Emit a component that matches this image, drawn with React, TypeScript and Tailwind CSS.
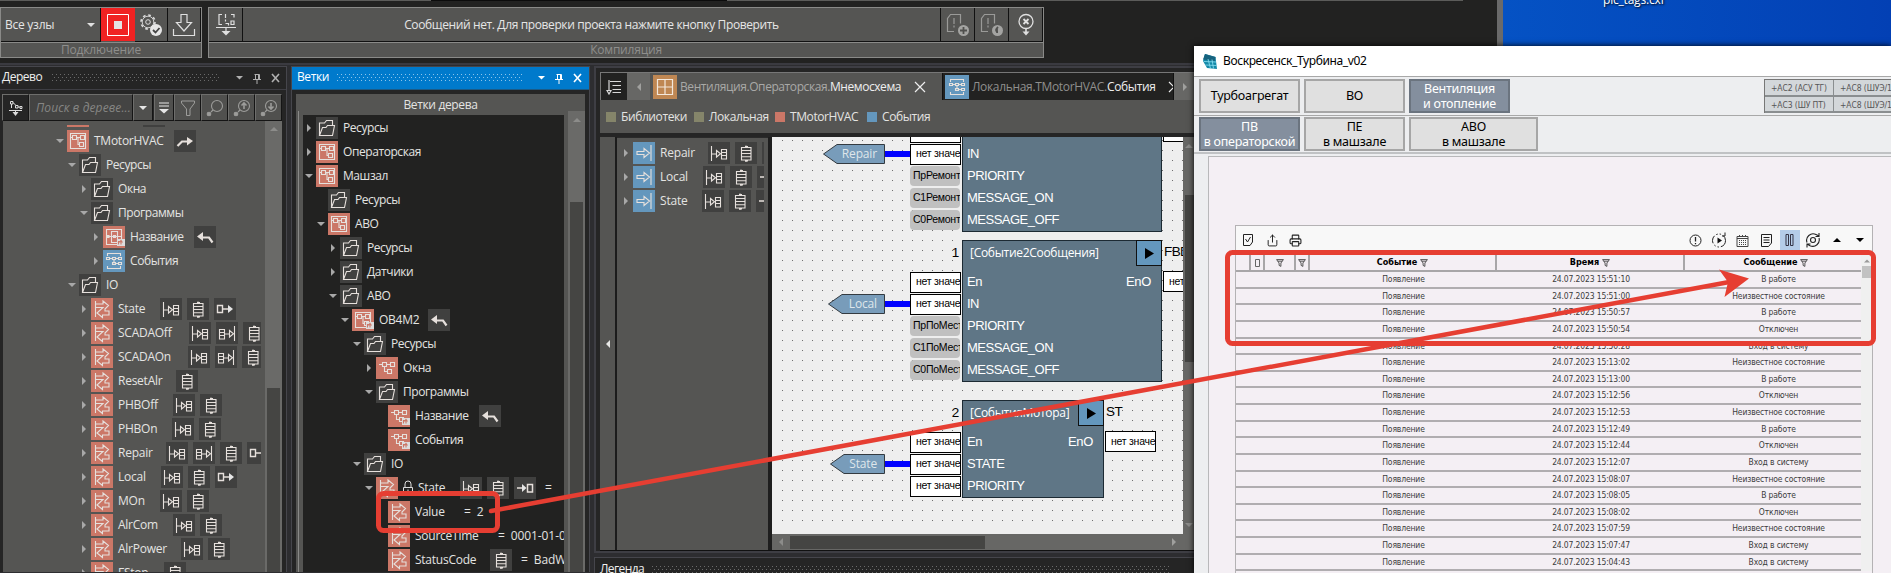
import React from "react";
import { Printer, Share } from "lucide-react";

const ui = "font-['Open_Sans','Noto_Sans',sans-serif]";

/* ---------- glyphs ---------- */

const TILE_COLORS: Record<string, string> = {
  fb: "bg-[#cb7767]",
  fbsub: "bg-[#cb7767]",
  fbx: "bg-[#cb7767]",
  prog: "bg-[#cb7767]",
  progsub: "bg-[#cb7767]",
  io: "bg-[#cb7767]",
  folder: "bg-[#40403f]",
  event: "bg-[#6497bd]",
  input: "bg-[#6497bd]",
};

const OVERLAY = (
  <g>
    <rect x="14" y="13" width="8" height="7" fill="#dcdcdc" stroke="none" />
    <path d="M17 15.5h-1.5v3M18 18.5v-3.5M16.5 16.5l1.5-2 1.5 2" stroke="#cb7767" />
  </g>
);

const BLOCKS = <path d="M5.500 5.500h4v4h-4zM13.500 5.500h4v4h-4zM12.500 12.500h4v4h-4zM9.500 7.500h4M3 7.500h2.500M11 7.500v7h1.500" />;
const LOOSE_BLOCKS = <path d="M6.500 5.500h4v4h-4zM14.500 5.500h4v4h-4zM11.500 12.500h4v4h-4zM10.500 7.500h4M3 7.500h3.500M8.500 9.500v5h3" />;

const GLYPHS: Record<string, React.ReactNode> = {
  fb: <><path d="M3.500 3.500h15v15h-15z" />{BLOCKS}</>,
  fbx: <><path d="M3.500 3.500h15v15h-15z" />{BLOCKS}{OVERLAY}</>,
  fbsub: LOOSE_BLOCKS,
  progsub: <>{LOOSE_BLOCKS}{OVERLAY}</>,
  prog: <><path d="M3.500 3.500h15v15h-15zM8.500 5.500h6v11h-6zM3.500 10.500h15M4 9.500h2v2H4zM10.500 9.500h2v2h-2z" />{OVERLAY}</>,
  io: <path d="M4.500 3v16M4.500 6H12V3l5.500 4.500L14 11v2h4v4h-6.500v2.500L6 15l6-5.500H4.500" />,
  folder: <path d="M3.500 18.500V6h5l2-2.500h6v5M3.500 18.500l3-8H10l1.500-2h7l-2 10z" />,
  event: <path d="M4.500 6V3.500h13V6M4.500 16v2.500h13V16M3.500 7.500h3v2h-3zM9.500 7.500h3v2h-3zM15.500 7.500h3v2h-3zM6.500 8.500h3M12.500 8.500h3M11 9.500v4M9.500 12.500h3v2h-3zM15.500 12.500h3v2h-3zM12.500 13.500h3" />,
  input: <path d="M18 3v16M4 9.500h7V6.500l5.500 4.500-5.500 4.500v-3H4z" />,
  in: <path d="M3.500 4v15M3.500 12H8.500M8.500 8.500v6.500l4-3.200zM13.500 7.500h5v9.500h-5zM13.500 10.500h5M13.500 13.500h5" />,
  out: <path d="M18.500 4v15M8.500 12h5M13.500 8.500v6.500l4-3.200zM3.500 7.500h5v9.500h-5zM3.500 10.500h5M3.500 13.500h5" />,
  db: <path d="M6.500 5.500h9.500v12.500H6.500zM6.500 8.500H16M6.500 11.500H16M6.500 14.800H16M10 4.500h3M11 3.500v2M10 19h3M11 18v2" />,
  to: <><path d="M3.500 7.500h5v7h-5zM8.500 11H15" strokeWidth="1.400" /><path d="M14 7l5 4-5 4z" fill="#e6e6e6" stroke="none" /></>,
  from: <><path d="M13.500 7.500h5v7.500h-5zM3 11h6" strokeWidth="1.500" /><path d="M8 7l4.500 4L8 15z" fill="#e6e6e6" stroke="none" /></>,
  redo: <path d="M3.500 16l4.500-4.500h6" strokeWidth="2.200" />,
  undo: <path d="M18.500 16.500l-3.500-5H8" strokeWidth="2.200" />,
};

function Glyph({ name }: { name: string }) {
  return (
    <svg width="22" height="22" viewBox="0 0 22 22" fill="none" stroke="#e6e0dc" strokeWidth="1.100">
      {GLYPHS[name]}
      {name === "redo" && <path d="M13 7l6 4-6 4.500z" fill="#e6e0dc" stroke="none" />}
      {name === "undo" && <path d="M9 6L3 10.500l6 4.500z" fill="#e6e0dc" stroke="none" />}
    </svg>
  );
}

function Tile({ name }: { name: string }) {
  return (
    <span className={`block size-[22px] shrink-0 ${TILE_COLORS[name] ?? "bg-[#40403f]"}`}>
      <Glyph name={name} />
    </span>
  );
}

function Tri({ dir, className = "fill-[#a8a8a8]" }: { dir: "r" | "d" | "l" | "u"; className?: string }) {
  const d = { r: "M3 1v8l4-4z", d: "M1 3h8L5 7z", l: "M7 1v8L3 5z", u: "M1 7h8L5 3z" }[dir];
  return (
    <svg width="10" height="10" viewBox="0 0 10 10" className={`shrink-0 ${className}`}>
      <path d={d} />
    </svg>
  );
}

function DotStrip({ id, color, className }: { id: string; color: string; className: string }) {
  return (
    <svg className={`h-[8px] ${className}`}>
      <defs>
        <pattern id={id} width="4" height="6" patternUnits="userSpaceOnUse">
          <rect x="0" y="0" width="1" height="1" fill={color} />
          <rect x="2" y="3" width="1" height="1" fill={color} />
        </pattern>
      </defs>
      <rect width="100%" height="100%" fill={`url(#${id})`} />
    </svg>
  );
}

function PanelControls({ color }: { color: string }) {
  return (
    <svg width="52" height="12" viewBox="0 0 52 12" fill="none" stroke={color}>
      <path d="M5 4h7L8.500 7.500z" fill={color} stroke="none" />
      <path d="M23.500 2.500h5M24.500 2.500v5M27.500 2v5.500M28.500 2.500v5M22 7.500h8M26 7.500V12" />
      <path d="M41 2l7 8M48 2l-7 8" strokeWidth="1.600" />
    </svg>
  );
}

/* ---------- tree ---------- */

interface Row {
  lv: number;
  open?: boolean | null;
  icon: string;
  text: string;
  w?: number;
  badges?: string[];
  lock?: boolean;
  tail?: string;
}

const isLatin = (s: string) => /^[A-Za-z0-9]+$/.test(s);

function TreeRow({ row, base }: { row: Row; base: number }) {
  return (
    <div className="flex h-6 items-start" style={{ paddingLeft: base + row.lv * 12 }}>
      <span className="flex h-[22px] w-[15px] shrink-0 items-center pl-[3px]">
        {row.open != null && <Tri dir={row.open ? "d" : "r"} />}
      </span>
      <Tile name={row.icon} />
      {row.lock && (
        <svg width="15" height="22" viewBox="0 0 15 22" fill="none" stroke="#dcdcdc" className="ml-1 -mr-1 shrink-0">
          <path d="M1.500 10.500h9v7h-9zM3 10V7a3 3 0 016 0v3M6 12.500v3" />
        </svg>
      )}
      <span
        className={`ml-[5px] h-[22px] shrink-0 whitespace-nowrap text-[12px] leading-[21px] text-[#e4e4e2] ${
          isLatin(row.text) ? "tracking-[-0.25px]" : "tracking-[-0.42px]"
        }`}
        style={{ width: row.w }}
      >
        {row.text}
      </span>
      <span className="flex gap-[5px]">{row.badges?.map((b, i) => <Tile key={i} name={b} />)}</span>
      {row.tail && (
        <span className={`${row.badges ? "ml-[9px]" : ""} whitespace-pre text-[12px] leading-[21px] tracking-[-0.1px] text-[#e4e4e2]`}>{row.tail}</span>
      )}
    </div>
  );
}

const TREE: Row[] = [
  { lv: 0, open: true, icon: "fb", text: "TMotorHVAC", w: 80, badges: ["redo"] },
  { lv: 1, open: true, icon: "folder", text: "Ресурсы" },
  { lv: 2, open: false, icon: "folder", text: "Окна" },
  { lv: 2, open: true, icon: "folder", text: "Программы" },
  { lv: 3, open: false, icon: "prog", text: "Название", w: 64, badges: ["undo"] },
  { lv: 3, open: false, icon: "event", text: "События" },
  { lv: 1, open: true, icon: "folder", text: "IO" },
  { lv: 2, open: false, icon: "io", text: "State", w: 42, badges: ["in", "db", "to"] },
  { lv: 2, open: false, icon: "io", text: "SCADAOff", w: 71, badges: ["in", "out", "db"] },
  { lv: 2, open: false, icon: "io", text: "SCADAOn", w: 70, badges: ["in", "out", "db"] },
  { lv: 2, open: false, icon: "io", text: "ResetAlr", w: 58, badges: ["db"] },
  { lv: 2, open: false, icon: "io", text: "PHBOff", w: 55, badges: ["in", "db"] },
  { lv: 2, open: false, icon: "io", text: "PHBOn", w: 54, badges: ["in", "db"] },
  { lv: 2, open: false, icon: "io", text: "Repair", w: 48, badges: ["in", "out", "db", "to"] },
  { lv: 2, open: false, icon: "io", text: "Local", w: 43, badges: ["in", "db", "to"] },
  { lv: 2, open: false, icon: "io", text: "MOn", w: 42, badges: ["in", "db"] },
  { lv: 2, open: false, icon: "io", text: "AlrCom", w: 55, badges: ["in", "db"] },
  { lv: 2, open: false, icon: "io", text: "AlrPower", w: 63, badges: ["in", "db"] },
  { lv: 2, open: false, icon: "io", text: "FStop", w: 46, badges: ["db"] },
];

const BRANCHES: Row[] = [
  { lv: 0, open: false, icon: "folder", text: "Ресурсы" },
  { lv: 0, open: false, icon: "fb", text: "Операторская" },
  { lv: 0, open: true, icon: "fb", text: "Машзал" },
  { lv: 1, open: null, icon: "folder", text: "Ресурсы" },
  { lv: 1, open: true, icon: "fb", text: "АВО" },
  { lv: 2, open: false, icon: "folder", text: "Ресурсы" },
  { lv: 2, open: false, icon: "folder", text: "Датчики" },
  { lv: 2, open: true, icon: "folder", text: "АВО" },
  { lv: 3, open: true, icon: "fbx", text: "OB4M2", w: 49, badges: ["undo"] },
  { lv: 4, open: true, icon: "folder", text: "Ресурсы" },
  { lv: 5, open: false, icon: "fbsub", text: "Окна" },
  { lv: 5, open: true, icon: "folder", text: "Программы" },
  { lv: 6, open: null, icon: "progsub", text: "Название", w: 64, badges: ["undo"] },
  { lv: 6, open: null, icon: "progsub", text: "События" },
  { lv: 4, open: true, icon: "folder", text: "IO" },
  { lv: 5, open: true, icon: "io", text: "State", w: 42, lock: true, badges: ["in", "db", "from"], tail: "=" },
  { lv: 6, open: null, icon: "io", text: "Value", w: 49, tail: "=  2" },
  { lv: 6, open: null, icon: "io", text: "SourceTime", w: 83, tail: "=  0001-01-01" },
  { lv: 6, open: null, icon: "io", text: "StatusCode", w: 75, badges: ["db"], tail: "=  BadWait" },
];

/* ---------- top toolbar ---------- */

const cell = "flex h-[34px] shrink-0 items-center justify-center border-r border-b border-[#111] bg-[#555553]";

function TopBar() {
  return (
    <div className="flex h-[66px] flex-col border-b-2 border-[#3a3a40] bg-[#222221]">
      <div className="flex h-px">
        <i className="block w-[431px] bg-[#5c5c5a]" />
        <i className="block w-[296px] bg-[#0c0c0c]" />
        <i className="block w-[736px] bg-[#5c5c5a]" />
      </div>
      <div className="mt-[6px] flex gap-[6px]">
        <div className="h-[51px] w-[202px] border border-[#8a8a88] bg-[#555553]">
          <div className="flex">
            <div className={`${cell} w-[100px] justify-between! pr-[4px] pl-1`}>
              <span className="text-[12px] tracking-[-0.25px] text-[#e6e6e6]">Все узлы</span>
              <Tri dir="d" className="fill-[#e0e0e0]" />
            </div>
            <div className="flex h-[33px] w-[34px] items-center justify-center bg-[#f02222]">
              <svg width="24" height="24" fill="none" stroke="#fff"><path d="M1.500 1.500h21v21h-21z" /><path d="M8 8h8v8H8z" fill="#e4e4e4" stroke="none" /></svg>
            </div>
            <div className={`${cell} w-[33px]`}>
              <svg width="24" height="26" viewBox="0 0 24 26" fill="none" stroke="#dcdcdc">
                <circle cx="9" cy="10" r="7" strokeWidth="1.600" strokeDasharray="2.750 2.750" />
                <circle cx="9" cy="10" r="5.800" strokeWidth=".9" />
                <circle cx="9" cy="10" r="2.300" />
                <circle cx="17" cy="18" r="6" fill="#e6e6e6" stroke="none" />
                <path d="M14 18l2.500 2.500 4-4.500" stroke="#444" strokeWidth="1.800" />
              </svg>
            </div>
            <div className={`${cell} w-[33px]`}>
              <svg width="24" height="24" viewBox="0 0 24 24" fill="none" stroke="#e0e0e0" strokeWidth="1.200">
                <path d="M9 1.500h6v8h4.500L12 18 4.500 9.500H9zM1.500 16v6.500h21V16" />
              </svg>
            </div>
          </div>
          <div className="h-[15px] border-t border-[#8a8a88] text-center text-[12px] leading-[14px] tracking-[-0.15px] text-[#8e8e8c]">Подключение</div>
        </div>
        <div className="h-[51px] w-[836px] border border-[#8a8a88] bg-[#555553]">
          <div className="flex">
            <div className={`${cell} w-[34px]`}>
              <svg width="22" height="24" viewBox="0 0 22 24" fill="none" stroke="#e0e0e0" strokeWidth="1.200">
                <path d="M7 1.500H4v10h3M10.500 1v4M10.500 6.500v2M16 1.500h3v3M16 8v3.500h3V8zM10.500 10.500h3v2M1 14.500h20M11 14.500v4" />
                <path d="M6.500 18h9L11 22.500z" fill="#e0e0e0" stroke="none" />
              </svg>
            </div>
            <div className={`${cell} w-[698px]`}>
              <span className="text-[12px] tracking-[-0.38px] text-[#e6e6e6]">Сообщений нет. Для проверки проекта нажмите кнопку Проверить</span>
            </div>
            {[0, 1].map((i) => (
              <div key={i} className={`${cell} w-[34px]`}>
                <svg width="24" height="24" viewBox="0 0 24 24" fill="none" stroke="#9a9a98" strokeWidth="1.200">
                  <path d="M8 18.500H1.500V5.500l3-4h10v9M8 5v6M8 12.500v2" />
                  <circle cx="17.500" cy="17.500" r="5.500" fill="#a4a4a2" stroke="none" />
                  <path d={i ? "M18 14c-3 3-2 5 0 5M17 16v4" : "M17.500 14v7M14 17.500h7"} stroke="#50504e" strokeWidth="1.800" />
                </svg>
              </div>
            ))}
            <div className={`${cell} w-[34px]`}>
              <svg width="20" height="24" viewBox="0 0 20 24" fill="none" stroke="#e0e0e0" strokeWidth="1.300">
                <circle cx="10" cy="8.500" r="7" />
                <path d="M7.500 6l5 5M12.500 6l-5 5" strokeWidth="1.800" />
                <path d="M10 16v4" strokeWidth="1.600" />
                <path d="M6.500 18.500h7L10 22.500z" fill="#e0e0e0" stroke="none" />
              </svg>
            </div>
          </div>
          <div className="h-[15px] border-t border-[#8a8a88] text-center text-[12px] leading-[14px] tracking-[-0.2px] text-[#8e8e8c]">Компиляция</div>
        </div>
      </div>
    </div>
  );
}

/* ---------- left panels ---------- */

function Magnifier({ inner }: { inner?: string }) {
  return (
    <svg width="18" height="18" viewBox="0 0 18 18" fill="none" stroke="#9c9c9a" strokeWidth="1.100">
      <circle cx="11" cy="7" r="5.500" />
      <path d="M7 11l-2 2" />
      <circle cx="3" cy="15" r="1.800" fill="#9c9c9a" />
      {inner && <path d={inner} strokeWidth="1.600" />}
    </svg>
  );
}

const tool = "flex h-[27px] shrink-0 items-center justify-center border border-[#6e6e6c] border-r-[#151515] border-b-[#151515] bg-[#50504e]";

function TreePanel() {
  return (
    <section className="flex h-[506px] w-[287px] shrink-0 flex-col border-t border-r border-[#46464c] bg-[#252525]">
      <div className="flex h-[23px] items-center border-b border-[#3e3e44]">
        <span className="ml-[2px] w-[50px] pb-[2px] text-[12px] tracking-[-0.5px] text-[#eee]">Дерево</span>
        <DotStrip id="dots-tree" color="#6a6a6a" className="w-[167px]" />
        <span className="ml-[12px]"><PanelControls color="#b0b0b0" /></span>
      </div>
      <div className="mt-[4px] flex pl-[2px]">
        <div className={`${tool} w-[27px] bg-[#252525]!`}>
          <svg width="14" height="16" viewBox="0 0 14 16" fill="none" stroke="#dcdcdc">
            <path d="M1.500 1.500h2.500v2.500H1.500zM2.500 4v4M4 2.500l3 3M6.500 5.500h2.500v2.500H6.500zM9 7h2M11 6.500h2v2h-2zM0 10.500h13M6.500 10v3" />
            <path d="M3.500 12h6l-3 4z" fill="#dcdcdc" stroke="none" />
          </svg>
        </div>
        <div className={`${tool} w-[104px] justify-start! bg-[#444443]! pl-[6px]`}>
          <span className="text-[12px] tracking-[0.12px] whitespace-nowrap text-[#868684] italic">Поиск в дереве...</span>
        </div>
        <div className={`${tool} w-[20px]`}><Tri dir="d" className="fill-[#e6e6e6]" /></div>
        <div className={`${tool} ml-[1px] w-[20px]`}>
          <svg width="12" height="14" viewBox="0 0 12 14"><path d="M1 1.500h10v1H1zM1 4.500h10v1H1zM1 8h10l-5 4.500z" fill="#e6e6e6" /></svg>
        </div>
        <div className={`${tool} w-[27px]`}>
          <svg width="14" height="16" viewBox="0 0 14 16" fill="none" stroke="#9c9c9a"><path d="M.5 1h13v2L9 9v6.500H5.500V9L.5 3z" /></svg>
        </div>
        <div className={`${tool} w-[27px]`}><Magnifier /></div>
        <div className={`${tool} w-[27px]`}><Magnifier inner="M11 10V4M8.500 6.500L11 4l2.500 2.500" /></div>
        <div className={`${tool} w-[27px]`}><Magnifier inner="M11 4v6M8.500 7.500L11 10l2.500-2.500" /></div>
      </div>
      <div className="mr-[4px] ml-[3px] flex min-h-0 flex-1">
        <div className="w-[258px] overflow-hidden bg-[#555553] pt-[4px]">
          <div className="mb-[2px] flex h-[2px] pl-[64px]">
            <i className="block w-[22px] bg-[#cb7767]" />
            <i className="ml-[54px] block w-[22px] bg-[#40403f]" />
          </div>
          <div className="pt-[1px]">
            {TREE.map((r, i) => <TreeRow key={i} row={r} base={49} />)}
          </div>
        </div>
        <div className="w-[4px] bg-[#555553]" />
        <div className="flex w-[17px] flex-col items-center bg-[#6a6a68]">
          <span className="mt-[3px] mb-[254px]"><Tri dir="u" className="fill-[#8c8c8a]" /></span>
          <div className="w-[13px] flex-1 bg-[#454543]" />
        </div>
      </div>
    </section>
  );
}

function BranchPanel() {
  return (
    <section className="ml-[4px] flex h-[506px] w-[299px] shrink-0 flex-col border-x border-t border-[#46464c] bg-[#252525]">
      <div className="flex h-[23px] items-center border-b border-[#1a5b88] bg-[#007acc]">
        <span className="ml-[5px] w-[40px] pb-[2px] text-[12px] text-white">Ветки</span>
        <DotStrip id="dots-branch" color="#8cc4ea" className="w-[185px]" />
        <span className="ml-[11px]"><PanelControls color="#fff" /></span>
      </div>
      <div className="mt-[4px] ml-[4px] flex h-[17px] w-[289px] items-center justify-center bg-[#555553] pt-[5px] text-[12px] tracking-[-0.35px] text-[#e4e4e2]">Ветки дерева</div>
      <div className="ml-[4px] flex min-h-0 w-[289px] flex-1 bg-[#555553]">
        <div className="ml-[2px] w-[5px] border-l border-[#8a8a88]" />
        <div className="mt-[4px] w-[261px] overflow-hidden bg-[#222221] pt-[2px]">
          <div className="-ml-[2px]">
            {BRANCHES.map((r, i) => <TreeRow key={i} row={r} base={0} />)}
          </div>
        </div>
        <div className="ml-[4px] flex flex-1 flex-col items-center bg-[#6a6a68]">
          <span className="mt-[4px] mb-[77px] h-[10px]"><Tri dir="u" className="fill-[#8c8c8a]" /></span>
          <div className="w-[13px] flex-1 bg-[#454543]" />
        </div>
      </div>
    </section>
  );
}

/* ---------- function-block editor ---------- */

interface Pin {
  name: string;
  value: string;
  konst?: boolean;
}

function Value({ text, konst }: { text: string; konst?: boolean }) {
  return (
    <div
      className={`flex items-center overflow-hidden font-['Liberation_Sans',sans-serif] text-[10.500px] tracking-[-0.25px] whitespace-nowrap text-black ${
        konst ? "h-[20px] w-[50px] rounded-[4px] bg-[#c0c0c0] pl-[3px]" : "h-[21px] w-[51px] border border-black bg-white pl-[5px]"
      }`}
    >
      {text}
    </div>
  );
}

function FBlock({ top, width, title, index, inst, pins, outValue }: {
  top: number; width: number; title: string; index: string; inst: string; pins: Pin[]; outValue: string;
}) {
  return (
    <div className="absolute left-[138px] flex font-['Liberation_Sans',sans-serif] text-[13.500px] tracking-[-0.3px]" style={{ top }}>
      <div className="w-[52px] pt-[1px]">
        <div className="h-[30px] pr-[3px] text-right leading-[23px]">{index}</div>
        {pins.map((p) => (
          <div key={p.name} className="flex h-[22px] items-center"><Value text={p.value} konst={p.konst} /></div>
        ))}
      </div>
      <div className="border border-[#1c2a33] bg-[#5f7686] text-white" style={{ width }}>
        <div className="mb-[5px] flex h-[25px] justify-between">
          <span className={`pl-[7px] text-[12px] leading-[23px] tracking-[-0.3px] ${ui}`}>{title}</span>
          <span className="-mt-px -mr-px flex h-[26px] w-[26px] shrink-0 items-center justify-center border border-[#111] bg-[#6497bd]">
            <svg width="9" height="11"><path d="M0 0v11l9-5.500z" /></svg>
          </span>
        </div>
        {pins.map((p, i) => (
          <div key={p.name} className="flex h-[22px] items-center justify-between pr-[10px] pl-[4px] text-[13px] tracking-[-0.5px]">
            <span>{p.name}</span>
            {i === 0 && <span className="tracking-[-0.3px]">EnO</span>}
          </div>
        ))}
      </div>
      <div className="pl-[1px]">
        <div className="h-[31px] pl-px leading-[24px] tracking-[-0.6px]">{inst}</div>
        <Value text={outValue} />
      </div>
    </div>
  );
}

function Flag({ top, tip, text }: { top: number; tip: number; text: string }) {
  const w = 113 - tip;
  return (
    <div className="absolute flex items-center" style={{ top, left: tip }}>
      <div className="relative h-[20px]" style={{ width: w }}>
        <svg width={w} height="20" className="absolute inset-0">
          <path d={`M.5 10L14 .5H${w - 0.5}V19.500H14z`} fill="#789cba" stroke="#333a40" />
        </svg>
        <span className={`relative block pr-[8px] text-right text-[12px] leading-[19px] tracking-[-0.15px] text-[#dfe6ea] ${ui}`}>{text}</span>
      </div>
      <div className="h-[6px] w-[25px] bg-[#0000ff]" />
    </div>
  );
}

const NV = "нет значе";

function Canvas() {
  return (
    <div className="relative h-[397px] w-[411px] overflow-hidden bg-[#eeeeee]">
      <svg className="absolute inset-0" width="411" height="397">
        <defs>
          <pattern id="grid" width="10" height="10" patternUnits="userSpaceOnUse">
            <rect x="0" y="3" width="1" height="1" fill="#707070" />
          </pattern>
        </defs>
        <rect x="6" width="405" height="386" fill="url(#grid)" />
      </svg>
      <FBlock top={-47} width={200} title="[Событие2Сообщения]" index="0" inst="FBD" outValue={NV}
        pins={[{ name: "En", value: NV }, { name: "IN", value: NV }, { name: "PRIORITY", value: "ПрРемонт", konst: true }, { name: "MESSAGE_ON", value: "С1Ремонт", konst: true }, { name: "MESSAGE_OFF", value: "С0Ремонт", konst: true }]} />
      <FBlock top={103} width={200} title="[Событие2Сообщения]" index="1" inst="FBD" outValue={NV}
        pins={[{ name: "En", value: NV }, { name: "IN", value: NV }, { name: "PRIORITY", value: "ПрПоМест", konst: true }, { name: "MESSAGE_ON", value: "С1ПоМест", konst: true }, { name: "MESSAGE_OFF", value: "С0ПоМест", konst: true }]} />
      <FBlock top={263} width={142} title="[СобытияМотора]" index="2" inst="ST" outValue={NV}
        pins={[{ name: "En", value: NV }, { name: "STATE", value: NV }, { name: "PRIORITY", value: NV }]} />
      <Flag top={7} tip={51} text="Repair" />
      <Flag top={157} tip={56} text="Local" />
      <Flag top={317} tip={58} text="State" />
    </div>
  );
}

const CRUMBS: [string, string, string][] = [
  ["bg-[#85856a]", "Библиотеки", "w-[78px]"],
  ["bg-[#85856a]", "Локальная", "w-[71px]"],
  ["bg-[#cb7767]", "TMotorHVAC", "w-[82px]"],
  ["bg-[#6497bd]", "События", "w-[60px]"],
];

const VARS: [string, string][] = [
  ["Repair", "w-[48px]"],
  ["Local", "w-[43px]"],
  ["State", "w-[42px]"],
];

function Editor() {
  return (
    <div className="ml-[4px] flex h-[507px] w-[660px] shrink-0 flex-col">
      <section className="h-[490px] border-y-2 border-l-2 border-[#3e3e44] bg-[#252525] pl-[4px]">
        <div className="mt-[4px] flex h-[28px] border-t border-l border-[#777]">
          <div className="flex w-[26px] items-center justify-center bg-[#222221]">
            <svg width="16" height="16" viewBox="0 0 16 16" fill="none" stroke="#d8d8d8" strokeWidth="1.200"><path d="M4 2.500h11M6.500 6.500H15M6.500 10.500H15M6.500 13.500H15M3 1v10M1 11.500h4l-2 3.500z" /></svg>
          </div>
          <div className="flex w-[23px] items-center justify-center bg-[#676765]"><Tri dir="l" className="fill-[#a0a09e]" /></div>
          <div className="flex w-[293px] items-center border-r border-[#111] bg-[#555553] pl-[3px]">
            <span className="flex h-[24px] w-[24px] shrink-0 items-center justify-center bg-[#bf8753]">
              <svg width="18" height="18" fill="none" stroke="#f3e8dc" strokeWidth="1.200"><path d="M1.500 1.500h15v15h-15zM9 1.500v15M1.500 9h15" /></svg>
            </span>
            <span className="ml-[3px] w-[234px] text-[12px] tracking-[-0.42px] whitespace-nowrap text-[#a9a9a7]">Вентиляция.Операторская.<span className="text-[#eee]">Мнемосхема</span></span>
            <svg width="12" height="12" stroke="#eee" strokeWidth="1.200" className="shrink-0"><path d="M1 1l10 10M11 1L1 11" /></svg>
          </div>
          <div className="flex w-[231px] items-center overflow-hidden border-r border-[#111] bg-[#222221] pl-[2px]">
            <span className="flex h-[24px] w-[24px] shrink-0 items-center justify-center bg-[#6497bd]"><Glyph name="event" /></span>
            <span className="ml-[3px] w-[196px] shrink-0 text-[12px] tracking-[-0.33px] whitespace-nowrap text-[#8f8f8d]">Локальная.TMotorHVAC.<span className="text-[#eee]">События</span></span>
            <svg width="12" height="12" stroke="#eee" strokeWidth="1.200" className="shrink-0"><path d="M1 1l10 10M11 1L1 11" /></svg>
          </div>
          <div className="flex w-[22px] items-center justify-center bg-[#676765]"><Tri dir="r" className="fill-[#a0a09e]" /></div>
        </div>
        <div className="flex h-[33px] items-center bg-[#555553] pl-[6px]">
          {CRUMBS.map(([c, t, w]) => (
            <React.Fragment key={t}>
              <i className={`block size-[10px] ${c}`} />
              <span className={`pl-[5px] text-[12px] whitespace-nowrap text-[#e4e4e2] ${w}`}>{t}</span>
            </React.Fragment>
          ))}
        </div>
        <div className="mt-[4px] flex h-[414px] border-b border-[#111] bg-[#1c1c1c]">
          <div className="flex w-[15px] items-center justify-center bg-[#555553]"><Tri dir="l" className="fill-[#e8e8e6]" /></div>
          <div className="ml-[2px] w-[151px] border-t border-[#2a2a2a] bg-[#555553] pt-[4px]">
            <div className="w-[147px] overflow-hidden">
              {VARS.map(([t, w]) => (
                <div key={t} className="flex h-6 items-start pl-[4px]">
                  <span className="flex h-[22px] w-[12px] shrink-0 items-center"><Tri dir="r" /></span>
                  <Tile name="input" />
                  <span className={`ml-[5px] shrink-0 text-[12px] leading-[21px] tracking-[-0.2px] text-[#e4e4e2] ${w}`}>{t}</span>
                  <span className="flex shrink-0 gap-[5px]"><Tile name="in" /><Tile name="db" /><Tile name="from" /></span>
                </div>
              ))}
            </div>
          </div>
          <div className="w-[4px] bg-[#1e1e1e]" />
          <div>
            <div className="flex">
              <Canvas />
              <div className="flex w-[12px] flex-col items-center bg-[#676765]">
                <span className="mt-[4px] h-[10px]"><Tri dir="u" className="fill-[#8c8c8a]" /></span>
                <div className="mt-[44px] h-[167px] w-[9px] bg-[#454543]" />
                <span className="mt-[158px] h-[10px]"><Tri dir="d" className="fill-[#8c8c8a]" /></span>
              </div>
            </div>
            <div className="flex h-[16px] w-[423px] items-center bg-[#676765] pl-[4px]">
              <Tri dir="l" className="fill-[#8c8c8a]" />
              <div className="ml-[4px] h-[13px] w-[195px] bg-[#454543]" />
              <span className="ml-[184px]"><Tri dir="r" className="fill-[#a0a09e]" /></span>
            </div>
          </div>
        </div>
      </section>
      <section className="mt-[4px] flex h-[30px] border-t border-l border-[#46464c] bg-[#252525] pl-[5px]">
        <span className="mt-[2px] w-[52px] text-[12px] tracking-[-0.6px] text-[#eee]">Легенда</span>
        <DotStrip id="dots-legend" color="#6a6a6a" className="mt-[8px] w-[518px]" />
      </section>
    </div>
  );
}

/* ---------- operator window ---------- */

function NavButton({ lines, active, width = "w-[101px]" }: { lines: string[]; active?: boolean; width?: string }) {
  return (
    <div
      className={`flex h-[34px] shrink-0 flex-col items-center justify-center border-2 text-[12.500px] leading-[15.500px] tracking-[-0.25px] ${width} ${
        active ? "border-[#6b747f] bg-[#848f9e] text-white" : "border-[#a6a6a6] bg-[#e0e0e0] text-black"
      }`}
    >
      {lines.map((l) => <span key={l} className="whitespace-nowrap">{l}</span>)}
    </div>
  );
}

const EVENTS: [string, string][] = [
  ["15:51:10", "В работе"],
  ["15:51:00", "Неизвестное состояние"],
  ["15:50:57", "В работе"],
  ["15:50:54", "Отключен"],
  ["15:50:28", "Вход в систему"],
  ["15:13:02", "Неизвестное состояние"],
  ["15:13:00", "В работе"],
  ["15:12:56", "Отключен"],
  ["15:12:53", "Неизвестное состояние"],
  ["15:12:49", "В работе"],
  ["15:12:44", "Отключен"],
  ["15:12:07", "Вход в систему"],
  ["15:08:07", "Неизвестное состояние"],
  ["15:08:05", "В работе"],
  ["15:08:02", "Отключен"],
  ["15:07:59", "Неизвестное состояние"],
  ["15:07:47", "Вход в систему"],
  ["15:04:43", "Вход в систему"],
];

function Funnel() {
  return (
    <svg width="8" height="8" viewBox="0 0 8 8" fill="none" stroke="#444"><path d="M.6.6h6.800L4.900 4v3.400L3.100 6.400V4zM1.800 2.200h4.400" strokeWidth=".9" /></svg>
  );
}

const th = "flex h-full items-center justify-center gap-[3px] border-r-2 border-[#a8a6a8]";
const ibtn = "flex h-[21px] w-[20px] shrink-0 items-center justify-center";

function EventTable() {
  return (
    <div className="mt-[68px] ml-[26px] h-[360px] w-[638px] overflow-hidden border border-[#b4b2b4] bg-[#f4eff4] font-['DejaVu_Sans_Condensed','DejaVu_Sans',sans-serif]">
      <div className="flex h-[28px] items-center bg-[#f8f8f8] pl-[2px]">
        <span className={ibtn}>
          <svg width="12" height="14" viewBox="0 0 12 14" fill="none" stroke="#222"><path d="M10.500 9V1.500h-9v11H8l2.500-3.500M3.500 6l2 3 3-5" /></svg>
        </span>
        <span className={`${ibtn} ml-[4px]`}><Share size={13} strokeWidth={1.800} color="#222" /></span>
        <span className={`${ibtn} mr-auto ml-[3px]`}><Printer size={13} strokeWidth={2} color="#222" /></span>
        <div className="mr-[2px] flex gap-[3.500px]">
          <span className={ibtn}><svg width="13" height="13" fill="none" stroke="#222"><circle cx="6.500" cy="6.500" r="5.500" /><path d="M6.500 3v4.500M6.500 9v1.200" strokeWidth="1.300" /></svg></span>
          <span className={ibtn}><svg width="16" height="16" fill="none" stroke="#222"><circle cx="8" cy="8.500" r="6.500" strokeDasharray="8 2 1.500 2 1.500 2" /><path d="M6.500 5.500v6L11 8.500z" fill="#111" stroke="none" /><path d="M11 4h3V.5" /></svg></span>
          <span className={ibtn}><svg width="13" height="13" fill="none" stroke="#444"><path d="M1 2.500h11v10H1zM1 4.500h11M3.500 1v2M6.500 1v2M9.500 1v2" /><path d="M3 6.500h7.500M3 8.500h7.500M3 10.500h7.500" strokeDasharray="1 1" /></svg></span>
          <span className={ibtn}><svg width="11" height="13" fill="none" stroke="#222"><path d="M.5.500h10v8.500L7.500 12.500H.5zM2.500 3.500h6M2.500 6h6M2.500 8.500h6" /></svg></span>
          <span className={`${ibtn} bg-[#b4cce8]`}><svg width="9" height="12" fill="none" stroke="#334"><path d="M1 .5h2.500v11H1zM5.500.500H8v11H5.500z" /></svg></span>
          <span className={ibtn}><svg width="16" height="16" fill="none" stroke="#222" strokeWidth="1.100"><circle cx="8" cy="8" r="2.500" /><path d="M2 10.500A6.500 6.500 0 0111 2.500L14 4M14 1v3.500h-3.500M14 6A6.500 6.500 0 015 13.700L2 12M2 15.500V12h3.500" /></svg></span>
          <span className={ibtn}><Tri dir="u" className="fill-black" /></span>
          <span className={ibtn}><Tri dir="d" className="fill-black" /></span>
        </div>
      </div>
      <div className="flex">
        <div className="w-[625px]">
          <div className="flex h-[18px] border-b-2 border-[#a8a6a8] pt-px text-[9px] font-bold text-black">
            <div className={`${th} w-[15px]`} />
            <div className={`${th} w-[14px]`}><svg width="5" height="8" fill="none" stroke="#666"><path d="M.5.500h4v7h-4z" /></svg></div>
            <div className={`${th} w-[31px]`}><Funnel /></div>
            <div className={`${th} w-[14px]`}><Funnel /></div>
            <div className={`${th} w-[187px]`}>Событие<Funnel /></div>
            <div className={`${th} w-[188px]`}>Время<Funnel /></div>
            <div className="flex flex-1 items-center justify-center gap-[3px] pl-[6px]">Сообщение<Funnel /></div>
          </div>
          {EVENTS.map(([t, m]) => (
            <div key={t} className="flex h-[16.630px] items-center border-b-2 border-[#b0adb0] text-[8.500px] leading-none tracking-[-0.15px] text-[#3c3c3c]">
              <span className="ml-[74px] w-[187px] text-center">Появление</span>
              <span className="w-[188px] text-center">24.07.2023 {t}</span>
              <span className="flex-1 pl-[11px] text-center">{m}</span>
            </div>
          ))}
        </div>
        <div className="flex flex-1 flex-col items-center bg-[#f0f0f0]">
          <span className="mt-[2px] h-[10px] scale-75"><Tri dir="u" className="fill-[#999]" /></span>
          <div className="h-[12px] w-[9px] bg-[#c2c2c2]" />
        </div>
      </div>
    </div>
  );
}

function OperatorWindow() {
  return (
    <div className="absolute top-[46px] left-[1194px] flex h-[527px] w-[697px] flex-col bg-[#edeef0] font-['Noto_Sans',sans-serif] tracking-[0px] shadow-[0_0_6px_#000]">
      <div className="flex h-[30px] items-center bg-white pl-[8px]">
        <svg width="16" height="17" viewBox="0 0 16 17">
          <path d="M3 1l10.500 3 1.500 12-10-1L1 8z" fill="#1389a8" />
          <path d="M3 1l10.500 3-.5 4L1 6.500z" fill="#17637f" />
          <path d="M2 8.500l12 .5M3.500 12l11 .5M6 6l2.500 9.500M10 6.500l1.500 9" stroke="#8be0f2" strokeWidth=".8" />
        </svg>
        <span className="ml-[5px] text-[12px] tracking-[-0.38px] text-black">Воскресенск_Турбина_v02</span>
      </div>
      <div className="flex h-[40px] border-t border-b border-[#a8a8a8] pt-[2px] pl-[5px]">
        <div className="flex gap-[4px]">
          <NavButton lines={["Турбоагрегат"]} />
          <NavButton lines={["ВО"]} />
          <NavButton lines={["Вентиляция", "и отопление"]} active />
        </div>
        <div className="ml-[254px] grid h-[34px] w-[138px] grid-cols-[69px_69px] grid-rows-2 border-t border-l border-[#777] bg-[#d3d7da] font-['DejaVu_Sans_Condensed',sans-serif] text-[8.500px] tracking-[-0.1px] text-[#555]">
          {["+АС2 (АСУ ТГ)", "+АС8 (ШУЭ/1)", "+АС3 (ШУ ПТ)", "+АС8 (ШУЭ/1)"].map((t, i) => (
            <span key={i} className="overflow-hidden border-r border-b-2 border-[#8a8e90] pl-[6px] leading-[16px] whitespace-nowrap">{t}</span>
          ))}
        </div>
      </div>
      <div className="flex h-[38px] gap-[4px] border-b-2 border-[#c0c2c4] pt-[1px] pl-[5px]">
        <NavButton lines={["ПВ", "в операторской"]} active />
        <NavButton lines={["ПЕ", "в машзале"]} />
        <NavButton lines={["АВО", "в машзале"]} width="w-[129px]" />
      </div>
      <div className="mt-[2px] ml-[14px] flex-1 overflow-hidden border-t border-l border-[#b8b8ba] bg-[#f4eff4]">
        <EventTable />
      </div>
    </div>
  );
}

/* ---------- page ---------- */

export default function App() {
  return (
    <div className={`relative flex h-[573px] w-[1891px] overflow-hidden bg-[#2d2d30] tracking-[-0.4px] ${ui}`}>
      <div className="flex w-[1503px] shrink-0 flex-col border-r-6 border-[#6a6a6a]">
        <TopBar />
        <div className="flex pt-[1px]">
          <TreePanel />
          <BranchPanel />
          <Editor />
        </div>
      </div>
      <div className="flex-1 bg-linear-to-r from-[#0552c4] to-[#0340b4]">
        <div className="-mt-[9px] ml-[100px] text-[12px] tracking-[-0.2px] text-white [text-shadow:1px_1px_2px_#000]">plc_tags.cxf</div>
      </div>
      <OperatorWindow />
      <svg className="pointer-events-none absolute inset-0" width="1891" height="573" fill="none" stroke="#e63e32">
        <rect x="378.500" y="493.500" width="119" height="37" rx="5" strokeWidth="5" />
        <rect x="1227.500" y="252.500" width="646" height="91" rx="5" strokeWidth="5" />
        <path d="M491 511L1732 281.500" strokeWidth="4.500" strokeLinecap="round" />
        <path d="M1719 269.500l30 9-24.500 18.500 3.500-15z" fill="#e63e32" stroke="none" />
      </svg>
    </div>
  );
}
